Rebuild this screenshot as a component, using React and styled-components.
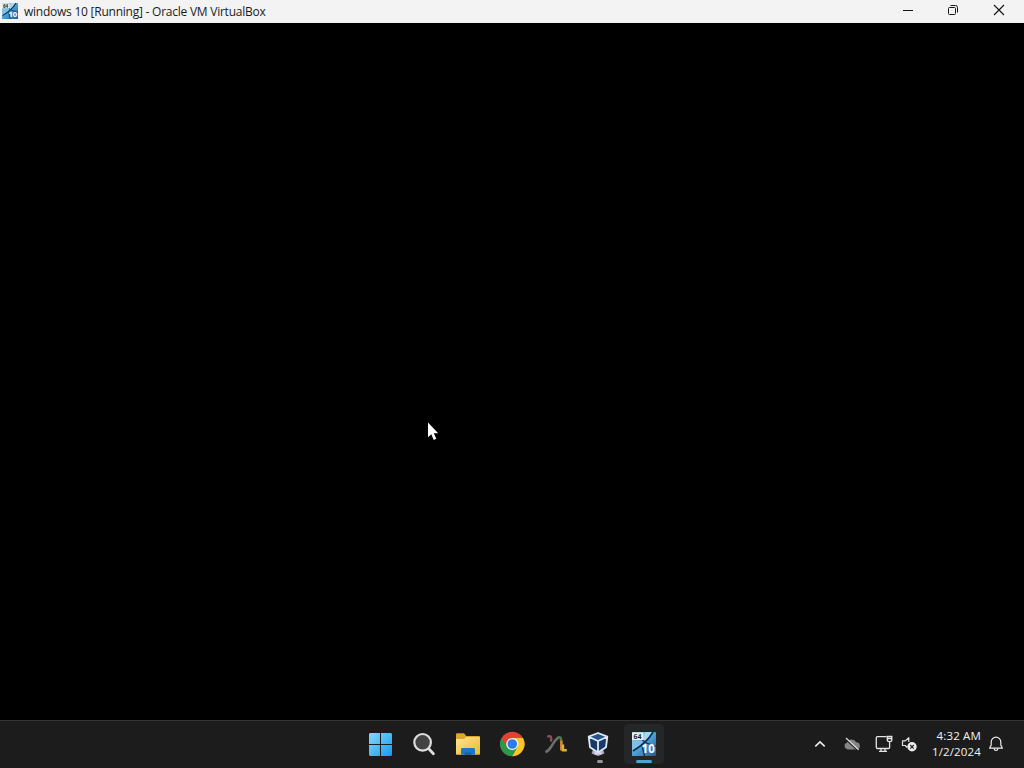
import React from "react";
import styled, { createGlobalStyle } from "styled-components";

const GlobalStyle = createGlobalStyle`
  * {
    box-sizing: border-box;
  }
  body {
    margin: 0;
    background: #000;
    overflow: hidden;
  }
`;

// vm icon, used in the title bar and in the taskbar
function VmIcon({ size }) {
  return (
    <svg width={size} height={size} viewBox="0 0 24 24">
      <defs>
        <linearGradient id={"vm" + size} x1="0" y1="0" x2="1" y2="1">
          <stop offset="0" stopColor="#8cc9ea" />
          <stop offset="0.5" stopColor="#4da0d3" />
          <stop offset="1" stopColor="#1c5c9c" />
        </linearGradient>
      </defs>
      <rect width="24" height="24" rx="0.8" fill={`url(#vm${size})`} />
      <path d="M13 0H20L13 10L11 7Z" fill="#a9d6ef" />
      <path d="M0 8.5H9L12 11L1 18H0Z" fill="#7fc0e4" />
      <path d="M21 0Q15.5 10 1 19" fill="none" stroke="#0d2c4f" strokeWidth="1.6" />
      <path d="M10.5 8L14.5 11L24 14.5M10 14L12.5 24" fill="none" stroke="#12365e" strokeWidth="1.3" />
      <path d="M0 .5H11.5V8H0Z" fill="#e9eeee" />
      <Label x="1.4" y="6.9" $size={7} $color="#202b33">64</Label>
      <Label x="9.6" y="21" $size={11.5} $color="#fff">10</Label>
    </svg>
  );
}

function WindowsIcon() {
  return (
    <svg width="24" height="24" viewBox="0 0 24 24">
      <defs>
        <linearGradient id="win" x1="0" y1="0" x2="24" y2="24" gradientUnits="userSpaceOnUse">
          <stop offset="0" stopColor="#8adcfb" />
          <stop offset="1" stopColor="#149bee" />
        </linearGradient>
      </defs>
      <path
        d="M2 1H12V12H1V2ZM13 1H23L24 2V12H13ZM1 13H12V24H2L1 23ZM13 13H24V23L23 24H13Z"
        fill="url(#win)"
      />
    </svg>
  );
}

function SearchIcon() {
  return (
    <svg width="24" height="24" viewBox="0 0 24 24">
      <circle cx="10.6" cy="10.3" r="8.3" fill="#434343" stroke="#dedede" strokeWidth="2.2" />
      <path d="M17 17L21.4 21.7" stroke="#dedede" strokeWidth="2.8" strokeLinecap="round" />
    </svg>
  );
}

function FolderIcon() {
  return (
    <svg width="26" height="24" viewBox="0 0 26 24">
      <defs>
        <linearGradient id="folder" x1="0" y1="0" x2="1" y2="1">
          <stop offset="0" stopColor="#ffe592" />
          <stop offset="1" stopColor="#edb82f" />
        </linearGradient>
      </defs>
      <path d="M1 2.5Q1 1.3 2.2 1.3H9L11.3 4H24Q25 4 25 5V12H1Z" fill="#dda52b" />
      <path d="M1 7H9L11 5H24Q25 5 25 6V22Q25 22.7 24 22.7H2Q1 22.7 1 22Z" fill="url(#folder)" />
      <path d="M6 22.8V17.5Q6 16.1 7.4 16.1H18.5Q20 16.1 20 17.5V22.8Z" fill="#1c78c6" />
      <path d="M9.5 22.8V20.5H16.5V22.8Z" fill="#1460a2" />
    </svg>
  );
}

function ChromeIcon() {
  return (
    <svg width="26" height="26" viewBox="0 0 26 26">
      <circle cx="13.3" cy="13" r="12.2" fill="#e34133" />
      <path d="M2.7 6.9A12.2 12.2 0 0 0 13.3 25.2L18.6 16.1L13.3 13L8 16.1Z" fill="#269b4b" />
      <path d="M23.9 6.9A12.2 12.2 0 0 1 13.3 25.2L18.6 16.1L13.3 6.9Z" fill="#f7c927" />
      <circle cx="13.3" cy="13" r="6.1" fill="#f5f7fa" />
      <circle cx="13.3" cy="13" r="4.8" fill="#2d7be5" />
    </svg>
  );
}

function RibbonIcon() {
  return (
    <svg width="24" height="24" viewBox="0 0 24 24" fill="none">
      <path d="M3.2 4.8Q7 2.8 7.3 6.5Q7.3 8 6.6 9.5" stroke="#8c4f58" strokeWidth="2.4" />
      <path d="M1.5 20.3Q5 18.5 7.3 14.5Q10.5 8.3 14.5 5.2" stroke="#6d6d70" strokeWidth="2.7" />
      <path d="M14 5.6Q17.3 3.9 17.2 9.5" stroke="#587848" strokeWidth="2.6" />
      <path d="M17.4 8.7V18.5" stroke="#d68435" strokeWidth="2.7" />
      <path d="M19 12.5V18.2H22.8" stroke="#d8b43c" strokeWidth="2.4" />
    </svg>
  );
}

function VirtualBoxIcon() {
  return (
    <svg width="26" height="25" viewBox="0 0 26 25">
      <path d="M6 17.5H16L17.5 21.5L11 24L4.5 21.5Z" fill="#a8a7bd" />
      <path d="M11 .8L20.6 4.5L19.5 15.5L11 21.5L2.5 15.5L1.4 4.5Z" fill="#173b66" />
      <path d="M11 1.5L18.5 4.7L11 8.5L3.5 4.7Z" fill="#26558c" />
      <path
        d="M11 1L20.3 4.7L19 15.3L11 20.5L3 15.3L1.7 4.7ZM1.7 4.7L11 9L20.3 4.7M11 9V20.5"
        fill="none"
        stroke="#dfe8f5"
        strokeWidth="1.8"
        strokeLinejoin="round"
      />
      <path d="M7.5 19L11 21.3L14.5 19V22.5H7.5Z" fill="#d8d4e1" />
    </svg>
  );
}

const apps = [
  { name: "Start", icon: <WindowsIcon /> },
  { name: "Search", icon: <SearchIcon /> },
  { name: "File Explorer", icon: <FolderIcon /> },
  { name: "Chrome", icon: <ChromeIcon /> },
  { name: "Ribbon", icon: <RibbonIcon /> },
  { name: "VirtualBox", icon: <VirtualBoxIcon />, state: "open" },
  { name: "windows 10", icon: <VmIcon size={24} />, state: "active" },
];

function App() {
  return (
    <Desktop>
      <GlobalStyle />
      <TitleBar>
        <VmIcon size={16} />
        <Title>windows 10 [Running] - Oracle VM VirtualBox</Title>
        <WindowButtons>
          <WindowButton aria-label="Minimize">
            <svg width="12" height="12" viewBox="0 0 12 12">
              <path d="M1 6.5H11" stroke="#161616" />
            </svg>
          </WindowButton>
          <WindowButton aria-label="Restore">
            <svg width="12" height="12" viewBox="0 0 12 12" fill="none" stroke="#161616">
              <rect x="1.5" y="3.5" width="7" height="7" rx="1" />
              <path d="M3.5 1.5H8.5Q10.5 1.5 10.5 3.5V8.5" />
            </svg>
          </WindowButton>
          <WindowButton aria-label="Close">
            <svg width="12" height="12" viewBox="0 0 12 12">
              <path d="M1 1L11 11M11 1L1 11" stroke="#161616" strokeWidth="1.15" />
            </svg>
          </WindowButton>
        </WindowButtons>
      </TitleBar>
      <Screen>
        <Pointer width="14" height="20" viewBox="0 0 14 20">
          <path d="M1 .5V15.2L4.3 12.3L6.7 18L9.3 16.8L6.8 11.3H11.2Z" fill="#fff" />
        </Pointer>
      </Screen>
      <Taskbar>
        <Apps>
          {apps.map((app) => (
            <AppButton key={app.name} aria-label={app.name} $active={app.state === "active"}>
              {app.icon}
              {app.state && <Indicator $active={app.state === "active"} />}
            </AppButton>
          ))}
        </Apps>
        <Tray>
          <TrayItem $width={32}>
            <svg width="12" height="8" viewBox="0 0 12 8">
              <path d="M1.3 6.3L6 1.8L10.7 6.3" fill="none" stroke="#ededed" strokeWidth="1.6" />
            </svg>
          </TrayItem>
          <TrayItem $width={32}>
            <svg width="18" height="14" viewBox="0 0 18 14">
              <path
                d="M4.5 12.5A3.5 3.5 0 0 1 4 5.7A5 5 0 0 1 13.2 5.2A3.7 3.7 0 0 1 14 12.5Z"
                fill="#858585"
              />
              <path d="M2.2 1.8L14.6 13.4" stroke="#1c1c1c" strokeWidth="1.2" />
              <path d="M3 1L15.6 12.9" stroke="#e3e3e3" strokeWidth="1.2" />
            </svg>
          </TrayItem>
          <TrayItem $width={32}>
            <svg width="18" height="18" viewBox="0 0 18 18" fill="none" stroke="#e4e4e4" strokeWidth="1.3">
              <path d="M11.5 1.6H2.6Q1.3 1.6 1.3 2.9V12.2Q1.3 13.5 2.6 13.5H13.4Q14.6 13.5 14.6 12.2V7" />
              <path d="M6 13.5V16.3M10 13.5V16.3M4 16.3H12" />
              <path d="M12.3 1.5H16.8V5Q16.8 6.6 14.6 6.6Q12.3 6.6 12.3 5ZM12.3 3.5H16.8" />
            </svg>
          </TrayItem>
          <TrayItem $width={18}>
            <svg width="17" height="17" viewBox="0 0 17 17">
              <path
                d="M7.8 7V2.7L4.3 5.9H1.5V10.5H4.3L6.2 12.5"
                fill="none"
                stroke="#e1e1e1"
                strokeWidth="1.2"
                strokeLinejoin="round"
              />
              <circle cx="11" cy="11.8" r="4.7" fill="#ededed" />
              <path d="M9.2 10L12.8 13.6M12.8 10L9.2 13.6" stroke="#202020" strokeWidth="1.1" />
            </svg>
          </TrayItem>
          <Clock>
            <div>4:32 AM</div>
            <div>1/2/2024</div>
          </Clock>
          <TrayItem $width={30}>
            <svg width="16" height="16" viewBox="0 0 16 16" fill="none" stroke="#ededed" strokeWidth="1.2">
              <path d="M8 1.2A4.8 4.8 0 0 0 3.2 6V9L1.6 12.2H14.4L12.8 9V6A4.8 4.8 0 0 0 8 1.2Z" strokeLinejoin="round" />
              <path d="M6 12.5Q6.3 14.5 8 14.5Q9.7 14.5 10 12.5" />
            </svg>
          </TrayItem>
        </Tray>
      </Taskbar>
    </Desktop>
  );
}
export default App;

const Desktop = styled.div`
  width: 1024px;
  height: 768px;
  display: flex;
  flex-direction: column;
  background: #000;
  font-family: "Open Sans", "Noto Sans", sans-serif;
`;

const TitleBar = styled.header`
  height: 23px;
  display: flex;
  align-items: center;
  padding-left: 2px;
  padding-bottom: 1px;
  background: #f3f3f3;
`;

const Title = styled.div`
  margin-left: 6px;
  padding-top: 2px;
  font-size: 12px;
  line-height: 18px;
  letter-spacing: -0.24px;
  color: #1b1b1b;
  white-space: nowrap;
`;

const WindowButtons = styled.div`
  display: flex;
  margin-left: auto;
  padding: 0 2px 2px 0;
`;

const WindowButton = styled.button`
  width: 45.5px;
  height: 20px;
  display: flex;
  align-items: center;
  justify-content: center;
  padding: 0;
  border: 0;
  background: none;

  &:nth-child(2) {
    padding-right: 1px;
  }
`;

const Screen = styled.main`
  height: 697px;
  position: relative;
  background: #000;
`;

/* mouse pointer, floats over the guest screen */
const Pointer = styled.svg`
  position: absolute;
  left: 427px;
  top: 399px;
`;

const Taskbar = styled.footer`
  height: 48px;
  display: flex;
  padding-left: 358px;
  border-top: 1px solid #343434;
  background: #1c1c1c;
`;

const Apps = styled.nav`
  display: flex;
`;

const AppButton = styled.button`
  position: relative;
  width: 40px;
  height: 40px;
  margin: 3px 2px 0;
  display: flex;
  align-items: center;
  justify-content: center;
  padding: 0;
  border: 0;
  border-radius: 4px;
  background: ${({ $active }) => ($active ? "#252627" : "none")};
`;

const Indicator = styled.span`
  position: absolute;
  bottom: 1px;
  left: 50%;
  width: ${({ $active }) => ($active ? "16px" : "6px")};
  height: 3px;
  border-radius: 2px;
  transform: translateX(-50%);
  background: ${({ $active }) => ($active ? "#4ba5da" : "#969696")};
`;

const Tray = styled.div`
  display: flex;
  align-items: center;
  margin-left: auto;
  padding: 0 13px 2px 0;
`;

const TrayItem = styled.div`
  width: ${({ $width }) => $width}px;
  display: flex;
  align-items: center;
  justify-content: center;
`;

const Clock = styled.div`
  width: 63px;
  display: flex;
  flex-direction: column;
  align-items: flex-end;
  font-size: 11.5px;
  line-height: 16px;
  letter-spacing: 0.15px;
  color: #f2f2f2;
  white-space: nowrap;
`;

const Label = styled.text`
  font-family: "Open Sans", sans-serif;
  font-weight: 700;
  font-size: ${({ $size }) => $size}px;
  fill: ${({ $color }) => $color};
`;
